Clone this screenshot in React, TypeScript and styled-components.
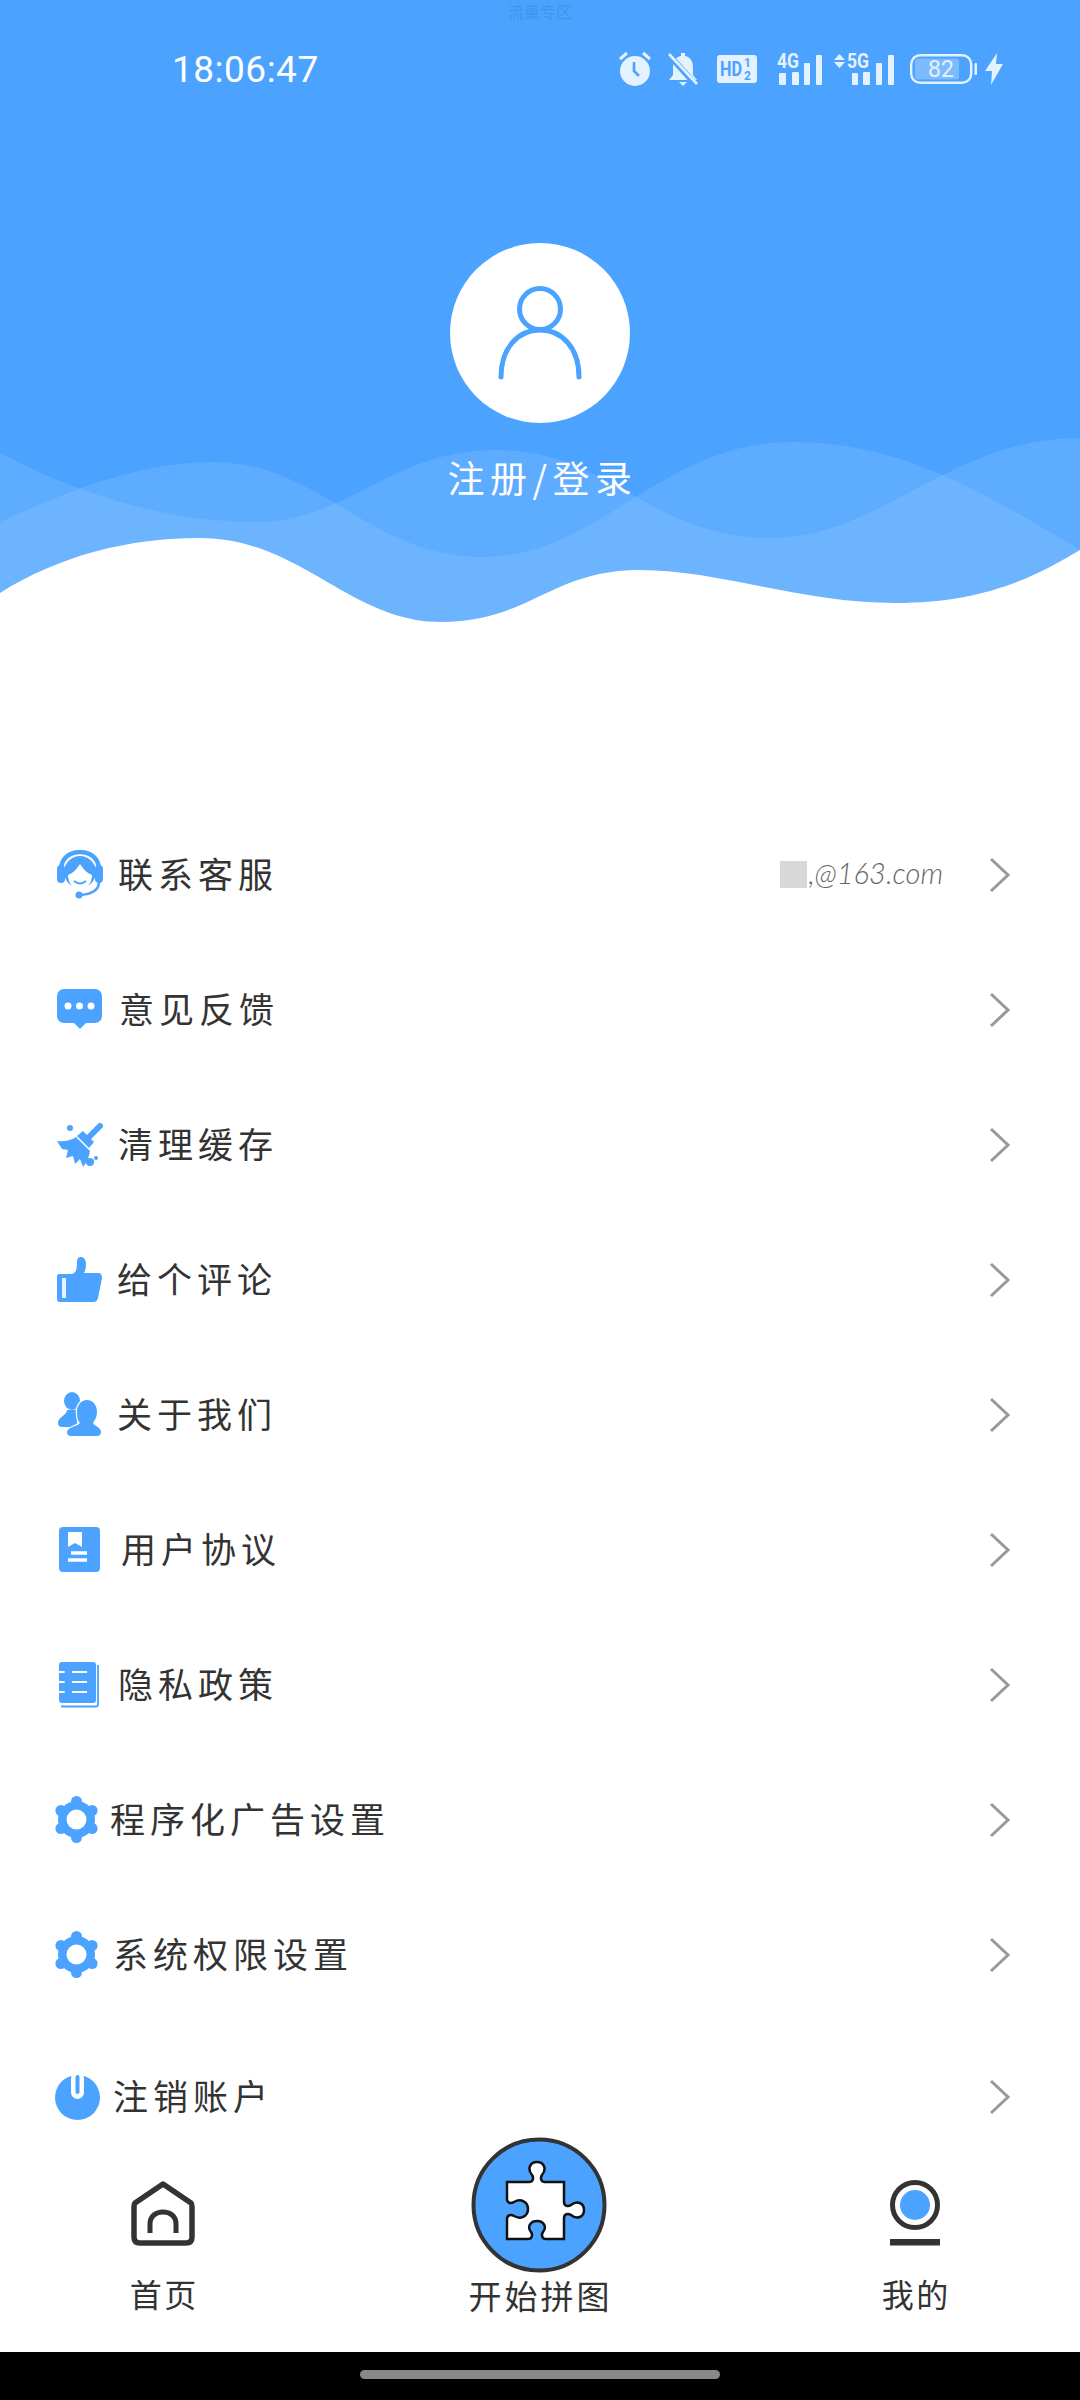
import React from "react";
import styled, { createGlobalStyle } from "styled-components";

const BLUE = "#4ba3ff";
const INK = "#333333";
const GLYPH = "#e4f1ff";
const CJK = `"Noto Sans CJK SC", "Noto Sans", sans-serif`;

const GlobalStyle = createGlobalStyle`
  html, body {
    margin: 0;
    padding: 0;
    background: #fff;
  }
  * {
    box-sizing: border-box;
  }
`;

const Page = styled.div`
  width: 1080px;
  height: 2400px;
  display: flex;
  flex-direction: column;
  overflow: hidden;
  background: #fff;
  font-family: ${CJK};
`;

const Header = styled.header`
  position: relative;
  flex: none;
  height: 622px;
  display: flex;
  flex-direction: column;
  align-items: center;
  background: ${BLUE};
`;

const WaveLayer = styled.svg`
  position: absolute;
  inset: 0;
`;

const TopHint = styled.div`
  position: absolute;
  top: 0;
  left: 0;
  right: 0;
  text-align: center;
  font-size: 16px;
  line-height: 22px;
  color: rgba(40, 110, 190, 0.3);
`;

const StatusBar = styled.div`
  position: relative;
  width: 100%;
  height: 138px;
  flex: none;
  display: flex;
  align-items: center;
  justify-content: space-between;
  padding: 0 77px 0 172px;
`;

const Clock = styled.span`
  font-family: Roboto, sans-serif;
  font-size: 37px;
  color: #fff;
  letter-spacing: 0.5px;
`;

const StatusIcons = styled.div`
  display: flex;
  align-items: center;
`;

const StatusGlyph = styled.svg<{ $gap: number }>`
  display: block;
  flex: none;
  overflow: visible;
  margin-left: ${p => p.$gap}px;
`;

const Avatar = styled.div`
  position: relative;
  width: 180px;
  height: 180px;
  margin-top: 105px;
  flex: none;
  display: flex;
  align-items: center;
  justify-content: center;
  border-radius: 50%;
  background: #fff;
`;

const LoginLabel = styled.div`
  position: relative;
  margin-top: 33px;
  padding-left: 5px;
  font-size: 37px;
  line-height: 42px;
  letter-spacing: 5.5px;
  color: #fff;
`;

const Menu = styled.main`
  flex: 1;
  min-height: 0;
  padding-top: 185px;
`;

const Row = styled.div<{ $last?: boolean }>`
  height: 135px;
  margin-top: ${p => (p.$last ? 7 : 0)}px;
  display: flex;
  align-items: center;
  padding: 0 68px 0 53px;
`;

const RowIcon = styled.svg`
  display: block;
  flex: none;
`;

const RowLabel = styled.span<{ $indent: number }>`
  margin-left: ${p => p.$indent}px;
  margin-bottom: 4px;
  flex: 1;
  font-size: 35px;
  line-height: 44px;
  letter-spacing: 5px;
  color: ${INK};
`;

const Blur = styled.span`
  width: 27px;
  height: 27px;
  flex: none;
  background: #d8d8d8;
`;

const Email = styled.span`
  margin: 0 45px 4px 1px;
  font-family: Lato, sans-serif;
  font-style: italic;
  font-weight: 300;
  font-size: 29px;
  color: #666;
`;

const TabBar = styled.nav`
  flex: none;
  height: 227px;
  display: flex;
  justify-content: space-between;
  padding: 0 65px 0 63px;
  background: #fff;
`;

const Tab = styled.div<{ $center?: boolean }>`
  width: 200px;
  display: flex;
  flex-direction: column;
  align-items: center;
  justify-content: flex-end;
  padding-bottom: ${p => (p.$center ? 38 : 40)}px;
`;

const TabIcon = styled.svg<{ $gap: number }>`
  display: block;
  flex: none;
  margin-bottom: ${p => p.$gap}px;
`;

const TabLabel = styled.span<{ $center?: boolean }>`
  padding-left: ${p => (p.$center ? 3 : 2.5)}px;
  font-size: ${p => (p.$center ? 33 : 32)}px;
  line-height: 38px;
  letter-spacing: ${p => (p.$center ? 3 : 2.5)}px;
  color: ${INK};
`;

const NavBar = styled.div`
  flex: none;
  height: 48px;
  display: flex;
  justify-content: center;
  padding-top: 18px;
  background: #000;
`;

const HomePill = styled.div`
  width: 360px;
  height: 9px;
  border-radius: 5px;
  background: #888;
`;

const Waves = () => (
  <WaveLayer width={1080} height={622} viewBox="0 0 1080 622">
    <path
      d="M0 522C70 490 140 462 213 462C320 462 370 557 482 557C600 557 660 442 792 442C900 442 980 490 1080 550L1080 622L0 622Z"
      fill="#fff"
      fillOpacity={0.1}
    />
    <path
      d="M0 453C70 490 160 522 255 522C350 522 390 450 496 450C610 450 650 538 771 538C880 538 950 438 1080 438L1080 622L0 622Z"
      fill="#fff"
      fillOpacity={0.1}
    />
    <path
      d="M0 593C60 555 130 538 200 538C300 538 350 622 441 622C530 622 550 570 640 570C720 570 800 603 895 603C980 603 1030 580 1080 550L1080 623L0 623Z"
      fill="#fff"
    />
  </WaveLayer>
);

const StatusGlyphs = () => (
  <StatusIcons>
    <StatusGlyph $gap={0} width={34} height={36} viewBox="0 0 34 36">
      <circle cx={17} cy={20} r={15} fill={GLYPH} />
      <path d="M16 11V20L21 25" fill="none" stroke={BLUE} strokeWidth={2.6} />
      <path d="M2 8L9 2M32 8L25 2" stroke={GLYPH} strokeWidth={3} />
    </StatusGlyph>
    <StatusGlyph $gap={16} width={30} height={36} viewBox="0 0 30 36">
      <path
        d="M13 2H17V5C23 6 25 11 25 17V24L29 29H1L5 24V17C5 11 7 6 13 5Z"
        fill={GLYPH}
      />
      <path d="M11 31H19L15 35Z" fill={GLYPH} />
      <path d="M1 4L28 34" stroke={BLUE} strokeWidth={6} />
      <path d="M1 3L29 33" stroke={GLYPH} strokeWidth={2.6} />
    </StatusGlyph>
    <StatusGlyph $gap={19} width={40} height={28} viewBox="0 0 40 28">
      <rect width={40} height={28} rx={3} fill={GLYPH} />
      <text
        x={3}
        y={21}
        fontFamily="Roboto"
        fontWeight={700}
        fontSize={20}
        textLength={22}
        lengthAdjust="spacingAndGlyphs"
        fill={BLUE}
      >
        HD
      </text>
      <text x={27} y={12} fontFamily="Roboto" fontWeight={700} fontSize={12} fill={BLUE}>
        1
      </text>
      <text x={27} y={25} fontFamily="Roboto" fontWeight={700} fontSize={12} fill={BLUE}>
        2
      </text>
    </StatusGlyph>
    <StatusGlyph $gap={20} width={45} height={32} viewBox="0 0 45 32">
      <text
        x={0}
        y={15}
        fontFamily="Roboto"
        fontWeight={700}
        fontSize={20}
        textLength={22}
        lengthAdjust="spacingAndGlyphs"
        fill={GLYPH}
      >
        4G
      </text>
      <rect x={2} y={20} width={7} height={12} rx={1} fill={GLYPH} />
      <rect x={15} y={19} width={7} height={13} rx={1} fill={GLYPH} />
      <rect x={27} y={10} width={6} height={22} rx={1} fill={GLYPH} />
      <rect x={39} y={2} width={6} height={30} rx={1} fill={GLYPH} />
    </StatusGlyph>
    <StatusGlyph $gap={12} width={60} height={32} viewBox="0 0 60 32">
      <path d="M5.5 1L11 7H0ZM0 9H11L5.500 15Z" fill={GLYPH} />
      <text
        x={13}
        y={15}
        fontFamily="Roboto"
        fontWeight={700}
        fontSize={20}
        textLength={22}
        lengthAdjust="spacingAndGlyphs"
        fill={GLYPH}
      >
        5G
      </text>
      <rect x={18} y={20} width={6} height={12} rx={1} fill={GLYPH} />
      <rect x={29} y={19} width={7} height={13} rx={1} fill={GLYPH} />
      <rect x={42} y={10} width={6} height={22} rx={1} fill={GLYPH} />
      <rect x={54} y={2} width={6} height={30} rx={1} fill={GLYPH} />
    </StatusGlyph>
    <StatusGlyph $gap={16} width={67} height={30} viewBox="0 0 67 30">
      <rect x={1.2} y={1.200} width={60} height={27.6} rx={9} fill="none" stroke={GLYPH} strokeWidth={2.4} />
      <rect x={5} y={4.500} width={44} height={21} rx={3} fill="#7dbbff" />
      <rect x={64.500} y={9} width={2.500} height={12} rx={1} fill={GLYPH} />
      <text
        x={31}
        y={23}
        textAnchor="middle"
        fontFamily="Roboto"
        fontSize={23}
        fill={GLYPH}
      >
        82
      </text>
    </StatusGlyph>
    <StatusGlyph $gap={8} width={18} height={32} viewBox="0 0 18 32">
      <path d="M12 0L0 18H7L6 32L18 11H11Z" fill={GLYPH} />
    </StatusGlyph>
  </StatusIcons>
);

const GEAR_ANGLES = [90, 30, -30, -90, -150, 150];

const icons: Record<string, React.ReactNode> = {
  headset: (
    <>
      <path d="M8 20C8 8 17 2 27 2S46 8 46 20" fill="none" stroke={BLUE} strokeWidth={4.500} />
      <rect x={4} y={15} width={8} height={18} rx={4} fill={BLUE} />
      <rect x={42} y={15} width={8} height={18} rx={4} fill={BLUE} />
      <circle cx={27} cy={22} r={16} fill={BLUE} />
      <path d="M15 25C20 23 24 19 27 14C30 19 34 23 39 25C39 34 33 39 27 39C21 39 15 34 15 25Z" fill="#fff" />
      <path d="M21 31Q27 36 33 31" fill="none" stroke={BLUE} strokeWidth={2} />
      <path d="M46 32C46 40 38 44 28 45" fill="none" stroke={BLUE} strokeWidth={2.500} />
      <circle cx={26} cy={45} r={3.500} fill={BLUE} />
    </>
  ),
  chat: (
    <>
      <rect x={4} y={4} width={45} height={34} rx={7} fill={BLUE} />
      <path d="M21 38H33L27 44Z" fill={BLUE} />
      <circle cx={15} cy={21} r={3.500} fill="#fff" />
      <circle cx={26.500} cy={21} r={3.500} fill="#fff" />
      <circle cx={38} cy={21} r={3.500} fill="#fff" />
    </>
  ),
  broom: (
    <>
      <path d="M47 6L36 17" stroke={BLUE} strokeWidth={6} strokeLinecap="round" />
      <path d="M30 11L41 22L36 28L24 16Z" fill={BLUE} />
      <path
        d="M23 17L37 31C36 37 34 42 30 47L27 39L22 44L20 36L13 38L15 30L9 29L4 21C12 22 19 20 23 17Z"
        fill={BLUE}
      />
      <circle cx={17} cy={8} r={3} fill={BLUE} />
      <circle cx={37} cy={42} r={4} fill={BLUE} />
      <circle cx={43} cy={38} r={2} fill={BLUE} />
    </>
  ),
  thumb: (
    <>
      <path
        d="M6 19H19C23 18 24 14 24 7C24 3 26 2 28 2C31 2 33 5 33 9C33 13 32 16 31 18H45C48 18 49 20 49 23L45 43C44 46 43 47 40 47H7C5 47 4 46 4 44V21C4 20 5 19 6 19Z"
        fill={BLUE}
      />
      <rect x={9} y={23} width={4} height={20} fill="#fff" fillOpacity={0.85} />
    </>
  ),
  users: (
    <>
      <ellipse cx={19} cy={11} rx={8} ry={9} fill={BLUE} />
      <path d="M14 20C14 25 5 27 5 33C5 36 7 37 10 37H24V20Z" fill={BLUE} />
      <path
        d="M34 10C40 10 44 15 44 22C44 28 41 31 40 33C41 36 48 37 48 42C48 45 46 46 43 46H19C16 46 14 45 14 42C14 37 26 36 27 33C25 31 24 28 24 22C24 15 28 10 34 10Z"
        fill={BLUE}
        stroke="#fff"
        strokeWidth={2.500}
        paintOrder="stroke"
      />
    </>
  ),
  doc: (
    <>
      <rect x={6} y={2} width={41} height={45} rx={4} fill={BLUE} />
      <path d="M15 7H29V22L22 18L15 22Z" fill="#fff" />
      <path d="M18 28H34M15 35H34" stroke="#fff" strokeWidth={3.500} />
    </>
  ),
  notebook: (
    <>
      <rect x={6} y={2} width={37} height={41} rx={3} fill={BLUE} />
      <path d="M45 5V44C45 45.500 44 46.500 43 46.500H8" fill="none" stroke={BLUE} strokeWidth={1.800} />
      <path d="M19 12H34M19 22H34M19 32H34" stroke="#fff" strokeWidth={2.200} />
      <path d="M5 12H11M5 22H11M5 32H11" stroke="#fff" strokeWidth={1.800} strokeLinecap="round" />
    </>
  ),
  gear: (
    <>
      <circle cx={23.500} cy={24.500} r={18.500} fill={BLUE} />
      {GEAR_ANGLES.map(a => (
        <circle
          key={a}
          cx={23.500 + 18 * Math.cos((a * Math.PI) / 180)}
          cy={24.500 - 18 * Math.sin((a * Math.PI) / 180)}
          r={5.500}
          fill={BLUE}
        />
      ))}
      <circle cx={23.500} cy={24.500} r={10} fill="#fff" />
    </>
  ),
  power: (
    <>
      <circle cx={24.500} cy={25.500} r={22.500} fill={BLUE} />
      <rect x={18} y={0} width={13} height={27} rx={6.500} fill="#fff" />
      <rect x={22.500} y={3} width={4} height={19} rx={2} fill={BLUE} />
    </>
  ),
};

interface MenuEntry {
  icon: string;
  label: string;
  indent: number;
}

const entries: MenuEntry[] = [
  { icon: "headset", label: "联系客服", indent: 15 },
  { icon: "chat", label: "意见反馈", indent: 16 },
  { icon: "broom", label: "清理缓存", indent: 15 },
  { icon: "thumb", label: "给个评论", indent: 14 },
  { icon: "users", label: "关于我们", indent: 14 },
  { icon: "doc", label: "用户协议", indent: 18 },
  { icon: "notebook", label: "隐私政策", indent: 15 },
  { icon: "gear", label: "程序化广告设置", indent: 7 },
  { icon: "gear", label: "系统权限设置", indent: 10 },
  { icon: "power", label: "注销账户", indent: 10 },
];

const Chevron = () => (
  <RowIcon width={24} height={36} viewBox="0 0 24 36">
    <path d="M3 2L20 18L3 34" fill="none" stroke="#999" strokeWidth={3} />
  </RowIcon>
);

const App = () => {
  return (
    <Page>
      <GlobalStyle />
      <Header>
        <Waves />
        <TopHint>流量专区</TopHint>
        <StatusBar>
          <Clock>18:06:47</Clock>
          <StatusGlyphs />
        </StatusBar>
        <Avatar>
          <svg width={84} height={94} viewBox="0 0 84 94">
            <ellipse cx={42} cy={23} rx={20.500} ry={20.500} fill="none" stroke={BLUE} strokeWidth={5} />
            <path
              d="M3 91C3 62 20 44 42 44S81 62 81 91"
              fill="none"
              stroke={BLUE}
              strokeWidth={5}
              strokeLinecap="round"
            />
          </svg>
        </Avatar>
        <LoginLabel>注册/登录</LoginLabel>
      </Header>
      <Menu>
        {entries.map((entry, i) => (
          <Row key={entry.label} $last={i === entries.length - 1}>
            <RowIcon width={50} height={50} viewBox="0 0 50 50">
              {icons[entry.icon]}
            </RowIcon>
            <RowLabel $indent={entry.indent}>{entry.label}</RowLabel>
            {i === 0 && (
              <>
                <Blur />
                <Email>,@163.com</Email>
              </>
            )}
            <Chevron />
          </Row>
        ))}
      </Menu>
      <TabBar>
        <Tab>
          <TabIcon $gap={27} width={64} height={66} viewBox="0 0 64 66">
            <path
              d="M32 3L60 22C61 23 61 24 61 26V56C61 60 59 62 55 62H9C5 62 3 60 3 56V26C3 24 3 23 4 22Z"
              fill="none"
              stroke={INK}
              strokeWidth={5.500}
              strokeLinejoin="round"
            />
            <path d="M19 52V43C19 35 25 31 32 31S45 35 45 43V52" fill="none" stroke={INK} strokeWidth={5} />
          </TabIcon>
          <TabLabel>首页</TabLabel>
        </Tab>
        <Tab $center>
          <TabIcon $gap={3} width={136} height={136} viewBox="0 0 136 136">
            <circle cx={68} cy={68} r={65.500} fill={BLUE} stroke={INK} strokeWidth={4} />
            <path
              d="M36 45H58C62 45 63 41 61 38C56 32 59 25 66 25C73 25 76 32 71 38C69 41 70 45 74 45H93V65C93 69 97 70 100 68C106 63 113 66 113 73C113 80 106 83 100 78C97 76 93 77 93 81V102H75C71 102 70 98 72 95C76 90 73 84 66 84C59 84 56 90 60 95C62 98 61 102 57 102H36V82C36 78 40 77 43 79C50 83 57 79 57 72C57 65 50 61 43 65C40 67 36 66 36 62Z"
              fill="#fff"
              stroke="#111"
              strokeWidth={2.500}
            />
          </TabIcon>
          <TabLabel $center>开始拼图</TabLabel>
        </Tab>
        <Tab>
          <TabIcon $gap={28} width={52} height={66} viewBox="0 0 52 66">
            <circle cx={26} cy={25} r={22.500} fill="#fff" stroke={INK} strokeWidth={5} />
            <circle cx={26} cy={25} r={15} fill={BLUE} />
            <rect x={1} y={59} width={50} height={6.500} fill={INK} />
          </TabIcon>
          <TabLabel>我的</TabLabel>
        </Tab>
      </TabBar>
      <NavBar>
        <HomePill />
      </NavBar>
    </Page>
  );
};

export default App;
